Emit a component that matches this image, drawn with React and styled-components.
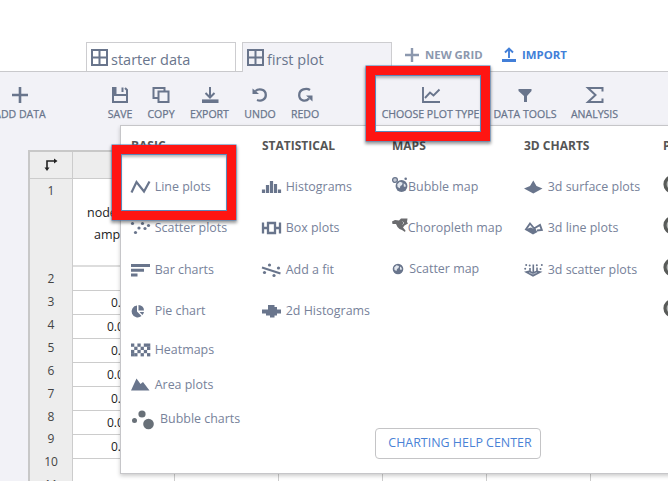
import React from "react";
import styled, { createGlobalStyle } from "styled-components";

const INK = "#69758c";

const Global = createGlobalStyle`
  * { box-sizing: border-box; }
  html, body { margin: 0; padding: 0; overflow: hidden; background: #fff; }
  body { font-family: "Open Sans", "Noto Sans", sans-serif; color: ${INK}; }
  svg { display: block; overflow: visible; flex: none; }
`;

const Page = styled.div`
  position: relative;
  width: 668px;
  height: 481px;
  overflow: hidden;
  display: flex;
  flex-direction: column;
  background: #f2f2f7;
`;

const TabBar = styled.header`
  flex: none;
  height: 72px;
  display: flex;
  align-items: flex-end;
  padding-left: 86px;
  background: #fff;
  border-bottom: 1px solid #c9c9cc;
`;

const Tab = styled.div`
  flex: none;
  width: 150px;
  height: ${(p) => (p.$active ? 30 : 29)}px;
  margin: 0 6px ${(p) => (p.$active ? -1 : 0)}px 0;
  padding: 0 0 0 4px;
  display: flex;
  align-items: flex-start;
  gap: 3px;
  border: 1px solid #cdcdd0;
  border-bottom: 0;
  background: ${(p) => (p.$active ? "#f2f2f7" : "#fff")};
  font-size: 14.5px;
  line-height: 34px;
  white-space: nowrap;
  svg { margin-top: 6px; }
`;

const TabAction = styled.div`
  height: 33px;
  display: flex;
  align-items: center;
  gap: ${(p) => p.$gap}px;
  margin-left: ${(p) => p.$ml}px;
  font-size: 11.4px;
  font-weight: 700;
  white-space: nowrap;
  color: ${(p) => p.$color};
`;

const ToolBar = styled.nav`
  flex: none;
  height: 54px;
  display: flex;
  margin-left: -10px;
  padding-top: 14px;
`;

const ToolItem = styled.div`
  flex: none;
  width: ${(p) => p.$w}px;
  margin-left: ${(p) => p.$ml || 0}px;
  display: flex;
  flex-direction: column;
  align-items: center;
  font-size: 10.55px;
  line-height: 14px;
  white-space: nowrap;
  -webkit-text-stroke: 0.25px ${INK};
  svg { margin-bottom: 3px; }
`;

const Sheet = styled.section`
  flex: none;
  width: 720px;
  height: 400px;
  margin: 24px 0 0 28px;
  display: grid;
  grid-template-columns: 42px 1fr;
  grid-template-rows: 27px 1fr;
  border: 2px solid #c8c8c8;
  background: #fff;
  font-size: 12px;
  color: #333;
`;

const Corner = styled.div`
  display: flex;
  align-items: center;
  justify-content: center;
  background: #ededed;
  border-bottom: 1px solid #ccc;
`;

const ColumnHeads = styled.div`
  background: #ededed;
  border-left: 1px solid #ccc;
  border-bottom: 1px solid #ccc;
`;

const RowNumbers = styled.div`
  background: #ededed;
  text-align: center;
  color: #444;
`;

const RowNumber = styled.div`
  height: ${(p) => p.$h}px;
  line-height: 23.9px;
`;

const Cells = styled.div`
  display: grid;
  grid-template-columns: 102px repeat(5, 104px);
  border-left: 1px solid #ccc;
`;

const Column = styled.div`
  border-right: 1px solid #ccc;
`;

const Cell = styled.div`
  height: ${(p) => p.$h}px;
  padding-left: ${(p) => p.$pad || 0}px;
  line-height: 23px;
  border-bottom: 1px solid #ccc;
  color: #222;
  white-space: nowrap;
  overflow: hidden;
`;

const HeadCell = styled(Cell)`
  padding: 23px 0 0 14px;
  line-height: 21.5px;
  font-size: 12.5px;
  border-bottom: 2px solid #ddd;
`;

const Indent = styled.div`
  padding-left: 7px;
`;

const Menu = styled.div`
  position: absolute;
  left: 120px;
  top: 125px;
  width: 600px;
  height: 349px;
  background: #fff;
  border: 1px solid #c6c6c9;
  box-shadow: 0 2px 4px rgba(0, 0, 0, 0.2);
`;

const MenuColumns = styled.div`
  display: grid;
  grid-template-columns: 131px 130px 132px 139px 60px;
  padding-left: 10px;
`;

const Heading = styled.div`
  height: 40px;
  padding-top: 11px;
  font-size: 12px;
  line-height: 18px;
  font-weight: 700;
  color: #555;
  white-space: nowrap;
`;

const MenuItem = styled.div`
  height: ${(p) => p.$h || 41.5}px;
  display: flex;
  align-items: center;
  font-size: 12.45px;
  line-height: 18px;
  color: #77829a;
  white-space: nowrap;
`;

const IconSlot = styled.span`
  flex: none;
  width: ${(p) => p.$w || 23.7}px;
`;

const HelpButton = styled.button`
  position: absolute;
  left: 254px;
  top: 302px;
  width: 166px;
  height: 31px;
  padding: 0 0 2px 4px;
  border: 1px solid #c4c4c6;
  border-radius: 4px;
  background: #fff;
  color: #4a82d6;
  font-family: inherit;
  font-size: 12.45px;
  line-height: 27px;
  white-space: nowrap;
`;

const Highlight = styled.div`
  position: absolute;
  left: ${(p) => p.$x}px;
  top: ${(p) => p.$y}px;
  width: 124.4px;
  height: 75px;
  border: 9px solid #ff1512;
  box-shadow: 0 0 0 0.5px #4b7fb8, 0 2px 3px 1px rgba(0, 0, 0, 0.4),
    inset 0 0 0 1px #5b88ba, inset 0 3px 3px rgba(0, 0, 0, 0.28);
`;

const Icon = ({ w = 20, h = 18, sw = 2, children, color = INK }) => (
  <svg width={w} height={h} viewBox={`0 0 ${w} ${h}`} fill="none" stroke={color} strokeWidth={sw}>
    {children}
  </svg>
);

const solid = { fill: INK, stroke: "none" };

const GridIcon = () => (
  <Icon w={17} h={17}><path d="M1 1H16V16H1ZM8.5 1V16M1 8.5H16" /></Icon>
);

const toolIcons = {
  add: <Icon sw={2.6}><path d="M10 1V17M2 9H18" /></Icon>,
  save: (
    <Icon>
      <path d="M3 1V16H17V4L15 2" />
      <path d="M3 9H17" />
      <path d="M3 1H6.500V8H3Z" {...solid} />
      <path d="M12.500 1.500V6" />
    </Icon>
  ),
  copy: (
    <Icon>
      <path d="M7.500 5.500H17.500V16H7.500Z" />
      <path d="M7 12H2.500V2H13.500V5" />
    </Icon>
  ),
  export: (
    <Icon>
      <path d="M10 1V11.500M5.500 7L10 11.500L14.500 7" />
      <path d="M2 15.200H18.500" strokeWidth="3.6" />
    </Icon>
  ),
  undo: (
    <Icon sw={2.3}>
      <path d="M5.500 5C8 2.500 15.800 2.200 15.800 9C15.800 13.500 11.500 15.800 7 14" />
      <path d="M2.500 2.500L4.800 4.300L9 8H2.500Z" {...solid} />
    </Icon>
  ),
  redo: (
    <Icon sw={2.3}>
      <path d="M15 4C11.500 1.700 4.200 3 4.200 9.200C4.200 14.500 10.500 16.500 14 12.500" />
      <path d="M17.500 9.500V15.500L11 9.500Z" {...solid} />
    </Icon>
  ),
  choose: (
    <Icon sw={1.9}>
      <path d="M2 1V16H19M4 12L9 6.500L12.500 9.500L18.500 3.500" />
    </Icon>
  ),
  tools: <Icon><path d="M3.500 3H16.500V5L12 10V16H9V10L3.500 5Z" {...solid} /></Icon>,
  analysis: <Icon><path d="M17.500 5.500V2H3L10.500 9L3 16H17.500V12.500" /></Icon>,
};

const tools = [
  ["add", "ADD DATA", 60, 0],
  ["save", "SAVE", 40, 50],
  ["copy", "COPY", 42, 0],
  ["export", "EXPORT", 55, 0],
  ["undo", "UNDO", 46, 0],
  ["redo", "REDO", 44, 0],
  ["choose", "CHOOSE PLOT TYPE", 109, 49],
  ["tools", "DATA TOOLS", 70, 5],
  ["analysis", "ANALYSIS", 61, 4],
];

const Dots = ({ points, r = 1.4 }) =>
  points.map(([x, y], i) => <circle key={i} cx={x} cy={y} r={r} {...solid} />);

const heat = [
  [0, 0], [2, 0], [4, 0], [5, 0], [1, 1], [3, 1], [5, 1], [0, 2],
  [2, 2], [4, 2], [0, 3], [1, 3], [3, 3], [5, 3],
];

const line = <Icon h={14} sw={2.2}><path d="M0.500 12.500L5.500 2L13 11.500L18.500 1.500" /></Icon>;
const scatter = (
  <Icon h={14}>
    <Dots r={1.6} points={[[1.5, 2.5], [4.5, 11.5], [8, 7], [11.5, 2.5], [14, 7.5], [17.5, 4.5]]} />
  </Icon>
);
const bars = <Icon h={14} sw={3}><path d="M0 2.500H19M0 7.200H13M0 12H6.500" /></Icon>;
const pie = (
  <Icon h={14}>
    <path d="M6 1.500V7.500L10.500 12A6 6 0 1 1 6 1.500Z" {...solid} />
    <path d="M7.500 1A5.500 5.500 0 0 1 13 6.500H7.500Z" {...solid} />
    <path d="M8.500 8H13A6 6 0 0 1 11.500 11Z" {...solid} />
  </Icon>
);
const heatmap = (
  <Icon h={14}>
    {heat.map(([x, y], i) => (
      <rect key={i} x={x * 3.2} y={0.5 + y * 3.2} width="3.3" height="3.3" {...solid} />
    ))}
  </Icon>
);
const area = <Icon h={14}><path d="M0 12.500L5.500 0.500L9.500 6L12 4L18.500 12.500Z" {...solid} /></Icon>;
const bubbles = (
  <Icon w={24} h={20}>
    <g fill="#687078" stroke="none">
      <circle cx="3.500" cy="11.500" r="2.500" />
      <circle cx="11" cy="5" r="3.600" />
      <circle cx="17.500" cy="15" r="5.300" />
    </g>
  </Icon>
);
const histogram = <Icon h={14} sw={3.2}><path d="M1.500 13V9.500M5.500 13V5M9.500 13V1M13.500 13V4M17.500 13V9.500" /></Icon>;
const box = <Icon h={14} sw={2.3}><path d="M1 1.500V12.500M18 1.500V12.500M1 7H6M13 7H18M6 2H13V12H6Z" /></Icon>;
const fit = (
  <Icon h={14} sw={2}>
    <path d="M0 4.500L18.500 10.500" />
    <Dots points={[[2.5, 9.5], [7.5, 2], [12, 12.5], [16.5, 5]]} r={1.6} />
  </Icon>
);
const histogram2d = <Icon h={14}><path d="M6 1H12.500V3H15V5.500H19V9.500H15V11.500H12.500V13.500H8V11.500H4V9.500H0V5.500H6Z" {...solid} /></Icon>;

const Globe = ({ x = 6, y = 7, r = 5 }) => (
  <g transform={`translate(${x} ${y}) scale(${r / 5})`} stroke="none">
    <circle r="5.300" fill={INK} />
    <path d="M-3.800 -1.500L-1.500 -3.800L1 -3L0.500 -1L-1 0L-1.500 2L-3.500 1Z M2 -2.500L3.800 -1L3.500 1L2 0.500Z" fill="#e2e7ee" />
  </g>
);
const bubbleMap = (
  <Icon w={16} h={18} sw={1.3}>
    <Globe x={9.5} y={8} r={5.6} />
    <circle cx="3" cy="2" r="2.400" fill="#c3c9d4" />
    <circle cx="13.700" cy="0.800" r="1.300" {...solid} />
  </Icon>
);
const choropleth = (
  <Icon w={16} h={18}>
    <path d="M0 2.500L3 1L7 1.500L9 -0.500L15.500 -0.500L15 3L16 4.500L12.500 6.500L11 8.500L13.500 11.500L13 13L10 11L7.500 10L5.500 8L4 5L0.500 5Z" fill="#6a6b6e" stroke="none" />
    <path d="M10.500 2.500L12 4L10.500 5.500" stroke="#bdbec0" strokeWidth="1" />
  </Icon>
);
const scatterMap = <Icon w={16} h={14}><Globe /></Icon>;
const surface = <Icon h={14}><path d="M0 8.500L6 6L9.300 0.500L12.500 6L18.500 8.500L9.300 13.500Z" {...solid} /></Icon>;
const line3d = (
  <Icon h={14} sw={1.9}>
    <path d="M1.500 9L6 2.500L11.500 9M10 7.500L16 4L17.800 9L13 9.500" />
    <path d="M0.500 8.500L7 6.500L12 9L13.500 11L9 13.500Z" {...solid} />
  </Icon>
);
const scatter3d = (
  <Icon h={14} sw={1.6}>
    <path d="M0 8.800L5 7.500L9 9L13 7.500L18.500 8.800L9 13.800Z" {...solid} />
    <path d="M9.300 1.500V10M6 5V9M13 4.500V9" />
    <path d="M5 9.500L9 11.200L13 9.500" stroke="#c9ceda" strokeWidth="0.7" />
    <Dots points={[[1.2, 5.7], [2.2, 2], [5.7, 2.6], [12.8, 2.2], [17.8, 2], [16.5, 6]]} r={1} />
  </Icon>
);
const ring = (
  <Icon w={18} h={18} color="#595b59" sw={3.2}>
    <circle cx="9.500" cy="6.200" r="7.500" fill="#b5b8b6" />
  </Icon>
);

const columns = [
  {
    title: "BASIC",
    items: [
      [line, "Line plots"], [scatter, "Scatter plots"], [bars, "Bar charts"], [pie, "Pie chart"],
      [heatmap, "Heatmaps", 36], [area, "Area plots", 34.5], [bubbles, "Bubble charts", 33, 29],
    ],
  },
  {
    title: "STATISTICAL",
    items: [[histogram, "Histograms"], [box, "Box plots"], [fit, "Add a fit"], [histogram2d, "2d Histograms"]],
  },
  {
    title: "MAPS",
    items: [
      [bubbleMap, "Bubble map", 42, 16], [choropleth, "Choropleth map", 40, 15.7],
      [scatterMap, "Scatter map", 42.5, 17.3],
    ],
  },
  {
    title: "3D CHARTS",
    items: [[surface, "3d surface plots"], [line3d, "3d line plots"], [scatter3d, "3d scatter plots"]],
  },
  { title: "PLOTS", items: [[ring, ""], [ring, ""], [ring, ""], [ring, ""]] },
];

const values = [
  ["0.1", 38], ["0.01", 34], ["0.2", 38], ["0.02", 34], ["0.3", 38], ["0.03", 34], ["0.4", 38],
];

export default function App() {
  return (
    <Page>
      <Global />
      <TabBar>
        <Tab><GridIcon />starter data</Tab>
        <Tab $active><GridIcon />first plot</Tab>
        <TabAction $color="#8c98ae" $ml={6} $gap={5}>
          <Icon w={16} h={16} color="#8c98ae" sw={2.4}><path d="M8 1V15M1 8H15" /></Icon>
          NEW GRID
        </TabAction>
        <TabAction $color="#427fd8" $ml={18.5} $gap={5}>
          <Icon w={16} h={16} color="#427fd8" sw={1.9}>
            <path d="M8 11V2M4 5.500L8 1.500L12 5.500" />
            <path d="M1 13.500H15" strokeWidth="3" />
          </Icon>
          IMPORT
        </TabAction>
      </TabBar>
      <ToolBar>
        {tools.map(([key, label, w, ml]) => (
          <ToolItem key={key} $w={w} $ml={ml}>{toolIcons[key]}{label}</ToolItem>
        ))}
      </ToolBar>
      <Sheet>
        <Corner>
          <Icon w={14} h={14} color="#222" sw={1.6}>
            <path d="M3 11V3H11" />
            <path d="M0.500 9.500H5.500L3 13ZM10 0.500V5.500L13.500 3Z" fill="#222" stroke="none" />
          </Icon>
        </Corner>
        <ColumnHeads />
        <RowNumbers>
          <RowNumber $h={88.2}>1</RowNumber>
          {[2, 3, 4, 5, 6, 7, 8, 9, 10, 11].map((n) => (
            <RowNumber key={n} $h={22.9}>{n}</RowNumber>
          ))}
        </RowNumbers>
        <Cells>
          <Column>
            <HeadCell $h={88}>node1<Indent>amplitude</Indent></HeadCell>
            <Cell $h={24} />
            {values.map(([v, pad], i) => <Cell key={i} $h={24} $pad={pad}>{v}</Cell>)}
          </Column>
          <Column /><Column /><Column /><Column /><Column />
        </Cells>
      </Sheet>
      <Menu>
        <MenuColumns>
          {columns.map((c) => (
            <div key={c.title}>
              <Heading>{c.title}</Heading>
              {c.items.map(([icon, label, h, slot], i) => (
                <MenuItem key={i} $h={h}><IconSlot $w={slot}>{icon}</IconSlot>{label}</MenuItem>
              ))}
            </div>
          ))}
        </MenuColumns>
        <HelpButton>CHARTING HELP CENTER</HelpButton>
      </Menu>
      <Highlight $x={366} $y={65.5} />
      <Highlight $x={111.5} $y={145} />
    </Page>
  );
}
